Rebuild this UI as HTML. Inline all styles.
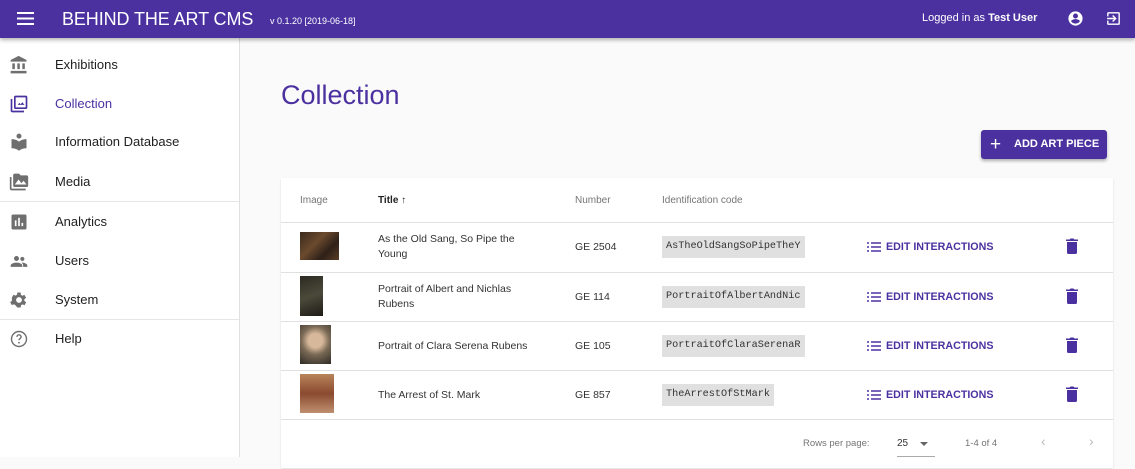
<!DOCTYPE html>
<html><head><meta charset="utf-8"><style>
*{box-sizing:border-box;margin:0;padding:0}
body{width:1135px;height:457px;overflow:hidden;font-family:"Liberation Sans",sans-serif;background:#fafafa;position:relative;color:#212121}
.top{position:absolute;left:0;top:0;width:1135px;height:38px;background:#4b31a0;color:#fff;box-shadow:0 2px 4px rgba(0,0,0,.3);z-index:2}
.side{position:absolute;left:0;top:38px;width:240px;height:419px;background:#fff;border-right:1px solid #e0e0e0}
.item{position:absolute;left:0;width:239px;height:39px;font-size:13px;line-height:39px}
.item span{position:absolute;left:55px}
.item svg{position:absolute;left:9px;top:10px}
.div{position:absolute;left:0;width:239px;height:1px;background:#e6e6e6}
.card{position:absolute;left:281px;top:178px;width:832px;height:290px;background:#fff;box-shadow:0 1px 2px rgba(0,0,0,.12)}
.th{position:absolute;top:17px;font-size:10px;color:#757575}
.row{position:absolute;left:0;width:832px;border-top:1px solid #e0e0e0}
.cell{position:absolute;font-size:10.5px;line-height:15px;color:#333}
.code{position:absolute;left:381px;background:#e0e0e0;font-family:"Liberation Mono",monospace;font-size:10.2px;height:22px;line-height:22px;padding:0 4px;color:#333}
.edit{position:absolute;left:586px;font-size:10.7px;font-weight:bold;color:#4b31a0}
.edit svg{vertical-align:-2px;margin-right:5px}
.trash{position:absolute;left:785px}
</style></head><body>
<div class="top">
<svg style="position:absolute;left:17px;top:12px" width="17" height="13" viewBox="0 0 17 13"><path d="M0 1h17M0 6.5h17M0 12h17" stroke="#fff" stroke-width="2"/></svg>
<div style="position:absolute;left:62px;top:9px;font-size:18px;letter-spacing:-.1px">BEHIND THE ART CMS</div>
<div style="position:absolute;left:270px;top:16px;font-size:9px">v 0.1.20 [2019-06-18]</div>
<div style="position:absolute;left:922px;top:12px;font-size:11px">Logged in as <b>Test User</b></div>
<svg style="position:absolute;left:1067px;top:10px" width="17" height="17" viewBox="0 0 24 24"><path fill="#fff" d="M12 2a10 10 0 100 20 10 10 0 000-20zm0 3a3.5 3.5 0 110 7 3.5 3.5 0 010-7zm0 14.2c-2.6 0-4.9-1.3-6.2-3.3 0-2 4.2-3.1 6.2-3.1s6.2 1.1 6.2 3.1c-1.3 2-3.6 3.3-6.2 3.3z"/></svg>
<svg style="position:absolute;left:1105px;top:10px" width="17" height="17" viewBox="0 0 24 24"><path fill="#fff" d="M10.1 15.6L11.5 17l5-5-5-5-1.4 1.4 2.6 2.6H3v2h9.7l-2.6 2.6zM19 3H5a2 2 0 00-2 2v4h2V5h14v14H5v-4H3v4a2 2 0 002 2h14a2 2 0 002-2V5a2 2 0 00-2-2z"/></svg>
</div>
<div class="side">
<div class="item" style="top:7px"><svg width="20" height="20" viewBox="0 0 24 24"><path fill="#6f6f6f" d="M4 10v7h3v-7H4zm6 0v7h3v-7h-3zM2 22h19v-3H2v3zm14-12v7h3v-7h-3zM11.5 1L2 6v2h19V6l-9.5-5z"/></svg><span>Exhibitions</span></div>
<div class="item" style="top:46px;color:#4b31a0"><svg width="20" height="20" viewBox="0 0 24 24"><path fill="#4b31a0" d="M20 2H8a2 2 0 00-2 2v12a2 2 0 002 2h12a2 2 0 002-2V4a2 2 0 00-2-2zm0 14H8V4h12v12zM4 6H2v14a2 2 0 002 2h14v-2H4V6zm6.5 7l2-2.5 1.5 2 2-2.7 2.5 3.2h-8z"/></svg><span>Collection</span></div>
<div class="item" style="top:84px"><svg width="20" height="20" viewBox="0 0 24 24"><path fill="#6f6f6f" d="M12 11.5C9.6 9.5 6.5 8.5 3 8.5v11c3.5 0 6.6 1 9 3 2.4-2 5.5-3 9-3v-11c-3.5 0-6.6 1-9 3zM12 8a3 3 0 100-6 3 3 0 000 6z"/></svg><span>Information Database</span></div>
<div class="item" style="top:124px"><svg width="20" height="20" viewBox="0 0 24 24"><path fill="#6f6f6f" d="M3 6H1v14a2 2 0 002 2h17v-2H3V6zm18-2h-7l-2-2H7a2 2 0 00-2 2v12a2 2 0 002 2h14a2 2 0 002-2V6a2 2 0 00-2-2zM7 15l4.5-6 3.5 4.5 2.5-3L21 15H7z"/></svg><span>Media</span></div>
<div class="div" style="top:163px"></div>
<div class="item" style="top:164px"><svg width="20" height="20" viewBox="0 0 24 24"><path fill="#6f6f6f" d="M19 3H5a2 2 0 00-2 2v14a2 2 0 002 2h14a2 2 0 002-2V5a2 2 0 00-2-2zM9 17H7v-7h2v7zm4 0h-2V7h2v10zm4 0h-2v-4h2v4z"/></svg><span>Analytics</span></div>
<div class="item" style="top:203px"><svg width="20" height="20" viewBox="0 0 24 24"><path fill="#6f6f6f" d="M9 12a3 3 0 100-6 3 3 0 000 6zm7 0a2.5 2.5 0 100-5 2.5 2.5 0 000 5zM9 14c-2.5 0-7 1.2-7 3.5V19h14v-1.5C16 15.2 11.5 14 9 14zm7 0c-.3 0-.6 0-1 .1 1.2.8 2 1.9 2 3.4V19h5v-1.5c0-2.3-4.5-3.5-6-3.5z"/></svg><span>Users</span></div>
<div class="item" style="top:242px"><svg width="20" height="20" viewBox="0 0 24 24"><path fill="#6f6f6f" d="M19.4 13a7.5 7.5 0 000-2l2.1-1.6-2-3.5-2.5 1a7 7 0 00-1.7-1L15 3h-4l-.4 2.7a7 7 0 00-1.7 1l-2.5-1-2 3.5L4.5 11a7.5 7.5 0 000 2l-2.1 1.6 2 3.5 2.5-1c.5.4 1.1.7 1.7 1L11 21h4l.4-2.7c.6-.3 1.2-.6 1.700-1l2.5 1 2-3.5L19.4 13zM13 15.5a3.5 3.5 0 110-7 3.5 3.5 0 010 7z" transform="translate(-1 0)"/></svg><span>System</span></div>
<div class="div" style="top:281px"></div>
<div class="item" style="top:281px"><svg width="20" height="20" viewBox="0 0 24 24"><circle cx="12" cy="12" r="9" fill="none" stroke="#6f6f6f" stroke-width="1.7"/><path d="M9.5 9.5a2.5 2.5 0 115 0c0 1.8-2.5 1.8-2.5 4" fill="none" stroke="#6f6f6f" stroke-width="1.7"/><circle cx="12" cy="16.5" r="1.1" fill="#6f6f6f"/></svg><span>Help</span></div>
</div>
<div style="position:absolute;left:281px;top:80px;font-size:27px;color:#4b31a0">Collection</div>
<div style="position:absolute;left:981px;top:130px;width:126px;height:29px;background:#4b31a0;border-radius:3px;box-shadow:0 2px 3px rgba(0,0,0,.3);color:#fff;font-size:11px;font-weight:bold;line-height:29px">
<span style="position:absolute;left:9px;top:0;font-size:19px;font-weight:normal">+</span><span style="position:absolute;left:33px">ADD ART PIECE</span></div>
<div class="card">
<div class="th" style="left:19px">Image</div>
<div class="th" style="left:97px;color:#222;font-weight:bold">Title ↑</div>
<div class="th" style="left:294px">Number</div>
<div class="th" style="left:381px">Identification code</div>
<div class="row" style="top:44px;height:50px">
<div style="position:absolute;left:19px;top:9px;width:39px;height:28px;background:linear-gradient(135deg,#3a2a1e,#6b4a2e 40%,#2e2018 70%,#5a3c26)"></div>
<div class="cell" style="left:97px;top:9px">As the Old Sang, So Pipe the<br>Young</div>
<div class="cell" style="left:294px;top:17px">GE 2504</div>
<div class="code" style="top:13px">AsTheOldSangSoPipeTheY</div>
</div>
<div class="row" style="top:94px;height:49px">
<div style="position:absolute;left:19px;top:3px;width:23px;height:40px;background:linear-gradient(160deg,#2c2a22,#4a4a3a 50%,#1e1a16)"></div>
<div class="cell" style="left:97px;top:9px">Portrait of Albert and Nichlas<br>Rubens</div>
<div class="cell" style="left:294px;top:17px">GE 114</div>
<div class="code" style="top:13px">PortraitOfAlbertAndNic</div>
</div>
<div class="row" style="top:143px;height:49px">
<div style="position:absolute;left:19px;top:3px;width:31px;height:39px;background:radial-gradient(circle at 50% 40%,#d8b89a 25%,#7a6a56 50%,#2e2a24)"></div>
<div class="cell" style="left:97px;top:17px">Portrait of Clara Serena Rubens</div>
<div class="cell" style="left:294px;top:17px">GE 105</div>
<div class="code" style="top:13px">PortraitOfClaraSerenaR</div>
</div>
<div class="row" style="top:192px;height:49px">
<div style="position:absolute;left:19px;top:3px;width:34px;height:39px;background:linear-gradient(180deg,#b8845a,#8a4a30 50%,#c09070)"></div>
<div class="cell" style="left:97px;top:17px">The Arrest of St. Mark</div>
<div class="cell" style="left:294px;top:17px">GE 857</div>
<div class="code" style="top:13px">TheArrestOfStMark</div>
</div>
<div class="row" style="top:241px;height:50px">
<div class="cell" style="left:522px;top:16px;font-size:9.5px;color:#757575">Rows per page:</div>
<div class="cell" style="left:616px;top:16px;font-size:10px">25</div>
<div style="position:absolute;left:639px;top:22px;border:4px solid transparent;border-top:4px solid #666"></div>
<div style="position:absolute;left:616px;top:36px;width:38px;height:1px;background:#aaa"></div>
<div class="cell" style="left:684px;top:16px;font-size:9.5px;color:#757575">1-4 of 4</div>
<div class="cell" style="left:760px;top:14px;font-size:14px;color:#bbb">‹</div>
<div class="cell" style="left:808px;top:14px;font-size:14px;color:#bbb">›</div>
</div>
</div>
<div style="position:absolute;left:281px;top:0;width:832px">
<div class="edit" style="left:586px;top:241px"><svg width="14" height="10" viewBox="0 0 14 10"><path d="M0 1h2M0 5h2M0 9h2M4 1h10M4 5h10M4 9h10" stroke="#4b31a0" stroke-width="1.6"/></svg>EDIT INTERACTIONS</div>
<div class="edit" style="left:586px;top:291px"><svg width="14" height="10" viewBox="0 0 14 10"><path d="M0 1h2M0 5h2M0 9h2M4 1h10M4 5h10M4 9h10" stroke="#4b31a0" stroke-width="1.6"/></svg>EDIT INTERACTIONS</div>
<div class="edit" style="left:586px;top:340px"><svg width="14" height="10" viewBox="0 0 14 10"><path d="M0 1h2M0 5h2M0 9h2M4 1h10M4 5h10M4 9h10" stroke="#4b31a0" stroke-width="1.6"/></svg>EDIT INTERACTIONS</div>
<div class="edit" style="left:586px;top:389px"><svg width="14" height="10" viewBox="0 0 14 10"><path d="M0 1h2M0 5h2M0 9h2M4 1h10M4 5h10M4 9h10" stroke="#4b31a0" stroke-width="1.6"/></svg>EDIT INTERACTIONS</div>
<svg class="trash" style="top:238px" width="12" height="16" viewBox="0 0 12 16"><path fill="#4b31a0" d="M1 4h10v10.5a1.5 1.5 0 01-1.5 1.5h-7A1.5 1.5 0 011 14.5V4zM0 1.5h3.5L4.5.5h3l1 1H12V3H0z"/></svg>
<svg class="trash" style="top:288px" width="12" height="16" viewBox="0 0 12 16"><path fill="#4b31a0" d="M1 4h10v10.5a1.5 1.5 0 01-1.5 1.5h-7A1.5 1.5 0 011 14.5V4zM0 1.5h3.5L4.5.5h3l1 1H12V3H0z"/></svg>
<svg class="trash" style="top:337px" width="12" height="16" viewBox="0 0 12 16"><path fill="#4b31a0" d="M1 4h10v10.5a1.5 1.5 0 01-1.5 1.5h-7A1.5 1.5 0 011 14.5V4zM0 1.5h3.5L4.5.5h3l1 1H12V3H0z"/></svg>
<svg class="trash" style="top:386px" width="12" height="16" viewBox="0 0 12 16"><path fill="#4b31a0" d="M1 4h10v10.5a1.5 1.5 0 01-1.5 1.5h-7A1.5 1.5 0 011 14.5V4zM0 1.5h3.5L4.5.5h3l1 1H12V3H0z"/></svg>
</div>
</body></html>
